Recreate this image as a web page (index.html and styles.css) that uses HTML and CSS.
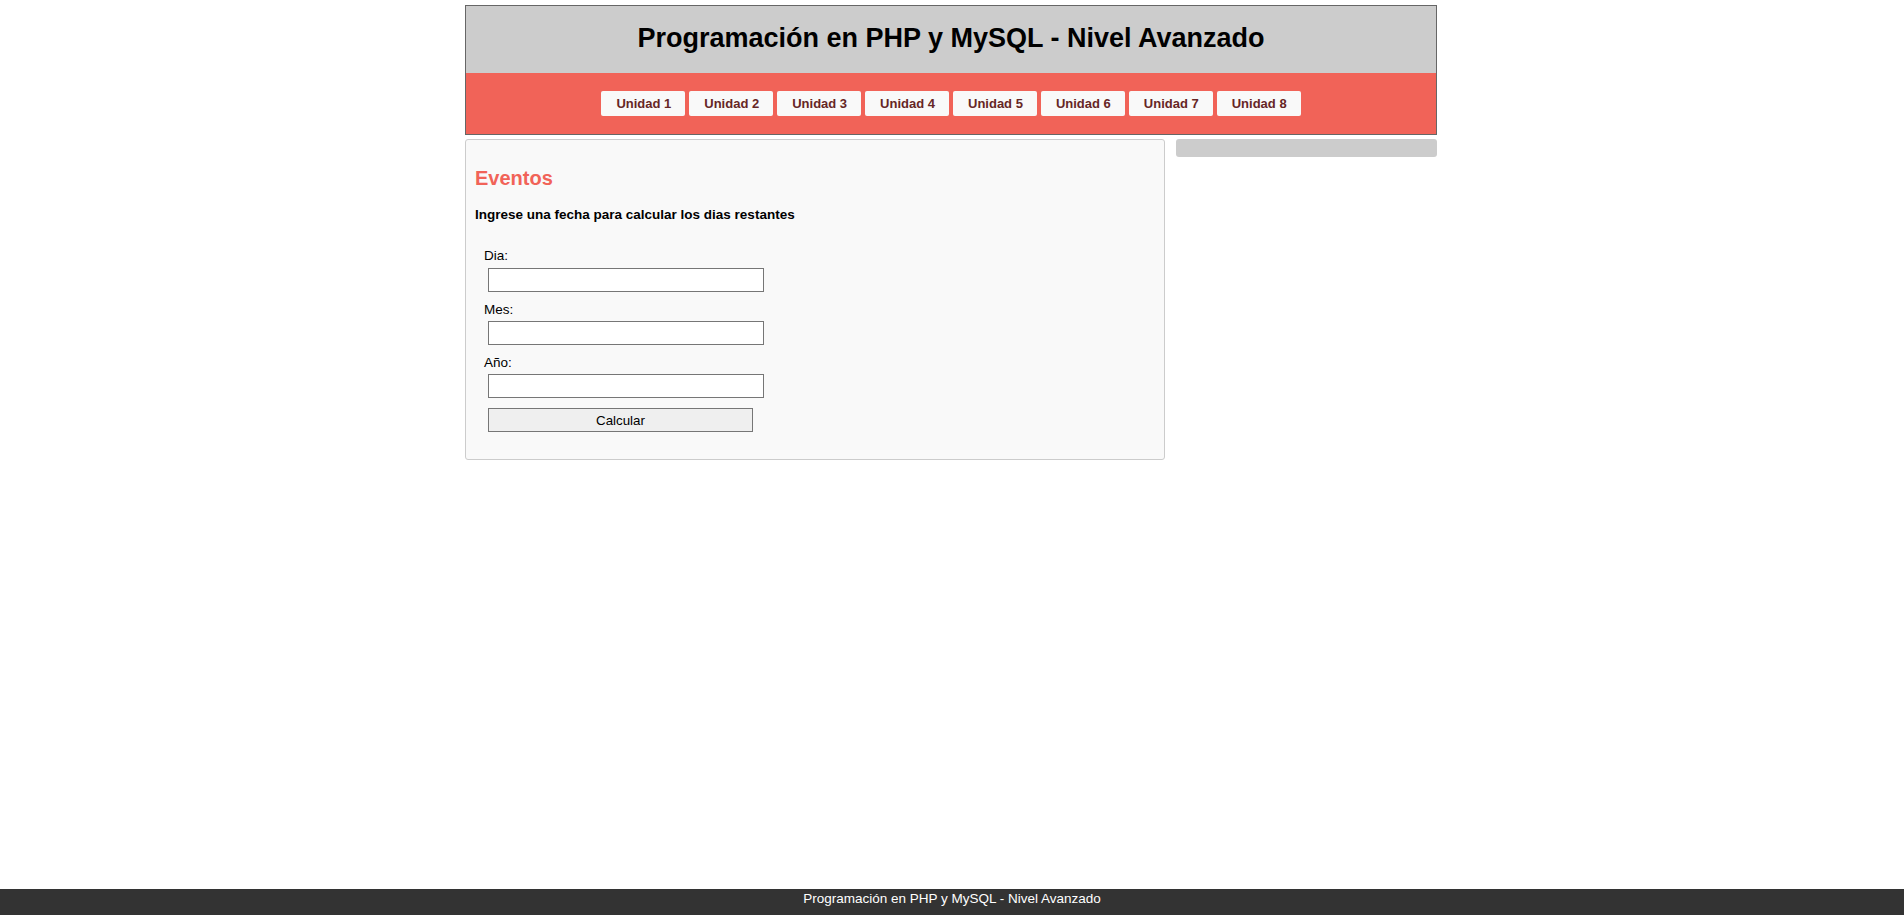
FILE: index.html
```html
<!DOCTYPE html>
<html lang="es">
<head>
<meta charset="utf-8">
<title>Eventos</title>
<link rel="stylesheet" href="styles.css">
</head>
<body>
<div class="page">
  <div class="container">
    <header class="header">
      <h1 class="title">Programación en PHP y MySQL - Nivel Avanzado</h1>
      <nav class="nav">
        <a class="nav-btn" href="#">Unidad 1</a>
        <a class="nav-btn" href="#">Unidad 2</a>
        <a class="nav-btn" href="#">Unidad 3</a>
        <a class="nav-btn" href="#">Unidad 4</a>
        <a class="nav-btn" href="#">Unidad 5</a>
        <a class="nav-btn" href="#">Unidad 6</a>
        <a class="nav-btn" href="#">Unidad 7</a>
        <a class="nav-btn" href="#">Unidad 8</a>
      </nav>
    </header>
    <div class="main">
      <section class="content">
        <h2 class="content-title">Eventos</h2>
        <h4 class="content-sub">Ingrese una fecha para calcular los dias restantes</h4>
        <form class="form">
          <label class="form-label" for="dia">Dia:</label>
          <input class="form-input" type="text" id="dia">
          <label class="form-label" for="mes">Mes:</label>
          <input class="form-input" type="text" id="mes">
          <label class="form-label" for="anio">Año:</label>
          <input class="form-input" type="text" id="anio">
          <button class="form-btn" type="button">Calcular</button>
        </form>
      </section>
      <aside class="sidebar"></aside>
    </div>
  </div>
  <footer class="footer">Programación en PHP y MySQL - Nivel Avanzado</footer>
</div>
</body>
</html>
```
FILE: styles.css
```css
html, body {
  margin: 0;
  padding: 0;
  background: #fff;
}
body {
  font-family: "Liberation Sans", Arial, sans-serif;
  font-size: 13.33px;
  color: #000;
}
.page {
  min-height: 100vh;
  display: flex;
  flex-direction: column;
}
.container {
  width: 972px;
  margin: 5px 0 0 calc(50% - 487px);
}
.header {
  border: 1px solid #666;
}
.title {
  margin: 0;
  background: #ccc;
  font-size: 27px;
  line-height: 31px;
  font-weight: bold;
  text-align: center;
  padding: 17px 0 19px;
}
.nav {
  background: #f16358;
  display: flex;
  justify-content: center;
  gap: 4px;
  padding: 18px 0;
}
.nav-btn {
  display: block;
  background: #f9f9f9;
  color: #662626;
  font-size: 13px;
  font-weight: bold;
  line-height: 15px;
  padding: 5px 14px 5px 15px;
  border-radius: 2px;
  text-decoration: none;
}
.main {
  display: flex;
  align-items: flex-start;
  gap: 11px;
  margin-top: 4px;
}
.content {
  width: 700px;
  box-sizing: border-box;
  background: #f9f9f9;
  border: 1px solid #ccc;
  border-radius: 3px;
  padding: 10px 10px 10px 9px;
}
.content-title {
  color: #f16358;
  font-size: 20px;
  font-weight: bold;
  margin: 16.6px 0;
  line-height: 23px;
}
.content-sub {
  font-size: 13.5px;
  font-weight: bold;
  margin: 17.7px 0;
  line-height: 15.33px;
}
.form {
  padding: 8px 0 17px;
  margin: 0;
}
.form-label {
  display: block;
  margin: 0 0 4px 9px;
  line-height: 15.33px;
  font-size: 13.5px;
}
.form-input {
  display: block;
  box-sizing: border-box;
  width: 276px;
  height: 24px;
  margin: 0 0 10px 13px;
  border: 1px solid #767676;
  background: #fff;
  padding: 1px 2px;
  font-family: inherit;
  font-size: 13.33px;
}
.form-btn {
  display: block;
  box-sizing: border-box;
  width: 265px;
  height: 24px;
  margin: 0 0 0 13px;
  border: 1px solid #767676;
  background: #efefef;
  font-family: inherit;
  font-size: 13.33px;
  color: #000;
  padding: 0;
}
.sidebar {
  flex: 1;
  height: 18px;
  background: #ccc;
  border-radius: 3px;
}
.footer {
  margin-top: auto;
  background: #333;
  color: #fff;
  text-align: center;
  height: 26px;
  box-sizing: border-box;
  padding-top: 2px;
  line-height: 15.33px;
  font-size: 13.5px;
}
```
